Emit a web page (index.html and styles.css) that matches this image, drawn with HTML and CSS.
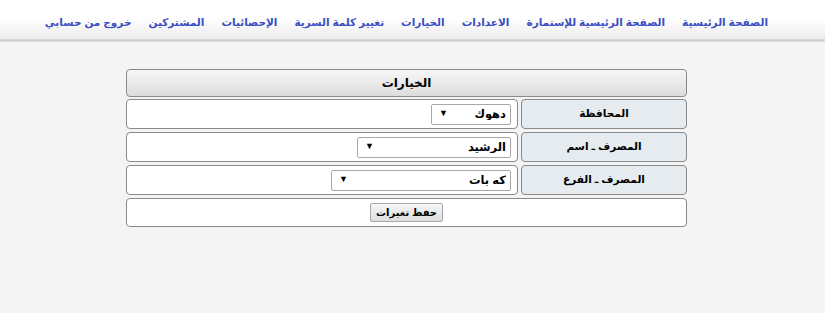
FILE: index.html
```html
<!DOCTYPE html>
<html lang="ar" dir="rtl">
  <head>
    <meta charset="UTF-8" />
    <title>الخيارات</title>
    <link rel="stylesheet" href="styles.css">
  </head>
  <body>
    <!-- Top menu -->
    <nav class="menu">
      <a href="#">الصفحة الرئيسية</a>
      <a href="#">الصفحة الرئيسية للإستمارة</a>
      <a href="#">الاعدادات</a>
      <a href="#">الخيارات</a>
      <a href="#">تغيير كلمة السرية</a>
      <a href="#">الإحصائيات</a>
      <a href="#">المشتركين</a>
      <a href="#">خروج من حسابي</a>
    </nav>

    <!-- Options form -->
    <form class="options">
      <div class="cell head">الخيارات</div>

      <div class="cell label">المحافظة</div>
      <div class="cell value">
        <span class="pick s-city">
          <select><option>دهوك</option></select>
        </span>
      </div>

      <div class="cell label">المصرف ـ اسم</div>
      <div class="cell value">
        <span class="pick s-bank">
          <select><option>الرشيد</option></select>
        </span>
      </div>

      <div class="cell label">المصرف ـ الفرع</div>
      <div class="cell value">
        <span class="pick s-branch">
          <select><option>كه بات</option></select>
        </span>
      </div>

      <div class="cell foot">
        <button type="button">حفظ تغيرات</button>
      </div>
    </form>
  </body>
</html>
```

FILE: styles.css
```css
* {
  box-sizing: border-box;
}

body {
  margin: 0;
  background: #f4f4f4;
  font-family: "Liberation Sans", "DejaVu Sans", sans-serif;
  font-size: 12px;
  color: #000;
}

.menu {
  height: 40px;
  display: flex;
  align-items: center;
  gap: 17px;
  padding: 5px 57px 0 0;
  background: linear-gradient(#ffffff, #ffffff 45%, #ececec);
  box-shadow: 0 1px 2px rgba(0, 0, 0, 0.25);
  border-bottom: 1px solid #d6d6d6;
  white-space: nowrap;
}

.menu a {
  color: #3b4ec2;
  font-weight: bold;
  font-size: 10.5px;
  text-decoration: none;
}

.options {
  width: 561px;
  margin: 29px 138px 0 0;
  display: grid;
  grid-template-columns: 166px 1fr;
  gap: 3px;
}

.cell {
  border: 1px solid #8a8a8a;
  border-radius: 4px;
  background: #fff;
  display: flex;
  align-items: center;
  min-height: 30px;
}

.head {
  grid-column: 1 / 3;
  min-height: 28px;
  margin-bottom: -1px;
  justify-content: center;
  font-weight: bold;
  font-size: 12px;
  background: linear-gradient(#f7f7f7, #dcdcdc);
}

.label {
  justify-content: center;
  font-weight: bold;
  font-size: 10.5px;
  background: #e6ebf0;
  padding-bottom: 2px;
}

.value {
  padding-right: 6px;
}

.pick {
  position: relative;
  display: block;
  height: 21px;
}

.pick::after {
  content: "▼";
  position: absolute;
  left: 8px;
  top: 5px;
  font-size: 9px;
  line-height: 1;
  pointer-events: none;
}

.pick select {
  appearance: none;
  width: 100%;
  height: 100%;
  font-family: inherit;
  font-weight: bold;
  font-size: 11.5px;
  border: 1px solid #a8a8a8;
  border-radius: 2px;
  background: #fff;
  padding: 0 4px;
  color: #000;
}

.s-city {
  width: 80px;
}

.s-bank {
  width: 154px;
}

.s-branch {
  width: 180px;
}

.foot {
  grid-column: 1 / 3;
  min-height: 29px;
  justify-content: center;
}

button {
  font-family: inherit;
  font-weight: bold;
  font-size: 10px;
  height: 19px;
  padding: 0 5px;
  border: 1px solid #a8a8a8;
  border-radius: 2px;
  background: linear-gradient(#f6f6f6, #dedede);
}
```
